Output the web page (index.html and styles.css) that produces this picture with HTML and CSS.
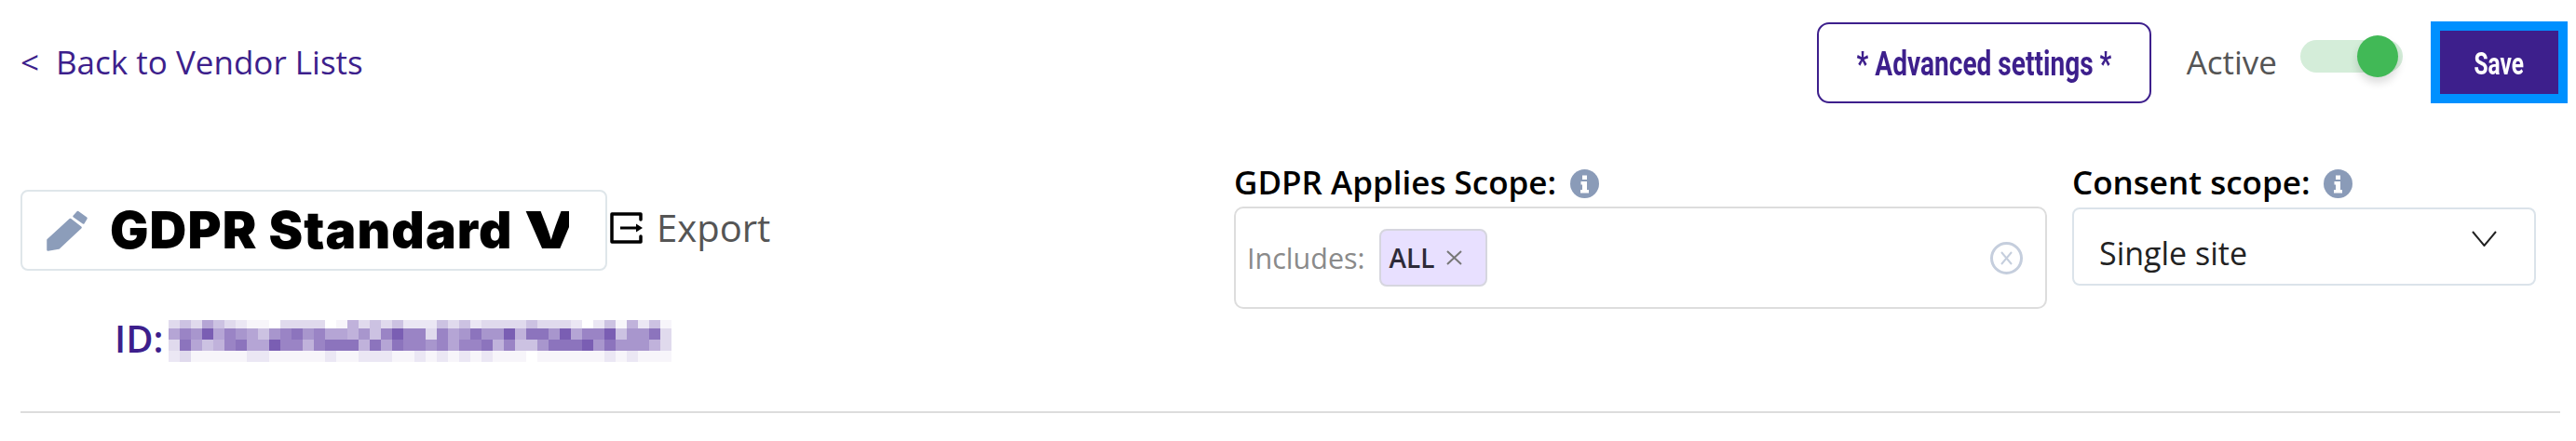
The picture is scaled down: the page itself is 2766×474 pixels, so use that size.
FILE: index.html
```html
<!DOCTYPE html>
<html lang="en">
<head>
<meta charset="utf-8">
<title>Vendor List</title>
<link rel="stylesheet" href="styles.css">
</head>
<body>
<div class="page">
  <header class="topbar">
    <a class="back" href="#"><span class="back-arrow">&lt;</span>Back to Vendor Lists</a>
    <div class="actions">
      <button class="advanced"><span class="narrow">* Advanced settings *</span></button>
      <span class="active-label">Active</span>
      <span class="toggle"><span class="knob"></span></span>
      <button class="save"><span class="narrow-save">Save</span></button>
    </div>
  </header>

  <main class="details">
    <section class="identity">
      <div class="title-row">
        <div class="title-box">
          <svg class="pencil" width="47" height="46" viewBox="0 0 47 46"><path d="M2.5 33 L26.5 11 L37.5 19.5 L14 41.5 L2.5 43.5 Z"/><path d="M30.5 7.5 L34.5 3 L43.5 9.5 L40.5 14.5 Z"/></svg>
          <span class="title-text">GDPR Standard <span class="title-last">V</span></span>
        </div>
        <a class="export" href="#">
          <svg width="35" height="34" viewBox="0 0 35 34"><path class="export-frame" d="M33 8V2H2V32H33V26"/><path class="export-line" d="M11 17H29"/><path class="export-head" d="M28 12.5L35 17L28 21.5Z"/></svg>
          <span>Export</span>
        </a>
      </div>
      <div class="id-row">
        <span class="id-label">ID:</span>
        <div class="redacted" aria-hidden="true">
          <i class="l3"></i><i class="l4"></i><i class="l3"></i><i class="l6"></i><i class="l4"></i><i class="l3"></i><i class="l2"></i><i class="l1"></i><i class="l1"></i><i class="l0"></i><i class="l3"></i><i class="l3"></i><i class="l3"></i><i class="l3"></i><i class="l0"></i><i class="l1"></i><i class="l5"></i><i class="l3"></i><i class="l4"></i><i class="l3"></i><i class="l4"></i><i class="l2"></i><i class="l2"></i><i class="l2"></i><i class="l4"></i><i class="l3"></i><i class="l4"></i><i class="l2"></i><i class="l3"></i><i class="l3"></i><i class="l3"></i><i class="l3"></i><i class="l4"></i><i class="l3"></i><i class="l3"></i><i class="l3"></i><i class="l2"></i><i class="l0"></i><i class="l2"></i><i class="l4"></i><i class="l1"></i><i class="l5"></i><i class="l2"></i><i class="l4"></i><i class="l1"></i>
          <i class="l6"></i><i class="l8"></i><i class="l7"></i><i class="l10"></i><i class="l6"></i><i class="l8"></i><i class="l7"></i><i class="l6"></i><i class="l4"></i><i class="l7"></i><i class="l8"></i><i class="l9"></i><i class="l7"></i><i class="l8"></i><i class="l6"></i><i class="l6"></i><i class="l5"></i><i class="l7"></i><i class="l4"></i><i class="l8"></i><i class="l10"></i><i class="l8"></i><i class="l8"></i><i class="l3"></i><i class="l8"></i><i class="l6"></i><i class="l7"></i><i class="l9"></i><i class="l7"></i><i class="l7"></i><i class="l10"></i><i class="l5"></i><i class="l9"></i><i class="l9"></i><i class="l7"></i><i class="l10"></i><i class="l6"></i><i class="l8"></i><i class="l8"></i><i class="l10"></i><i class="l4"></i><i class="l7"></i><i class="l7"></i><i class="l9"></i><i class="l3"></i>
          <i class="l3"></i><i class="l9"></i><i class="l6"></i><i class="l4"></i><i class="l5"></i><i class="l8"></i><i class="l9"></i><i class="l6"></i><i class="l6"></i><i class="l10"></i><i class="l8"></i><i class="l8"></i><i class="l5"></i><i class="l8"></i><i class="l9"></i><i class="l9"></i><i class="l9"></i><i class="l5"></i><i class="l9"></i><i class="l6"></i><i class="l9"></i><i class="l8"></i><i class="l8"></i><i class="l7"></i><i class="l8"></i><i class="l6"></i><i class="l8"></i><i class="l8"></i><i class="l9"></i><i class="l5"></i><i class="l8"></i><i class="l4"></i><i class="l4"></i><i class="l7"></i><i class="l9"></i><i class="l9"></i><i class="l9"></i><i class="l10"></i><i class="l7"></i><i class="l9"></i><i class="l7"></i><i class="l7"></i><i class="l7"></i><i class="l5"></i><i class="l3"></i>
          <i class="l2"></i><i class="l3"></i><i class="l1"></i><i class="l1"></i><i class="l1"></i><i class="l1"></i><i class="l1"></i><i class="l2"></i><i class="l2"></i><i class="l1"></i><i class="l1"></i><i class="l1"></i><i class="l1"></i><i class="l1"></i><i class="l2"></i><i class="l1"></i><i class="l1"></i><i class="l2"></i><i class="l2"></i><i class="l2"></i><i class="l1"></i><i class="l1"></i><i class="l2"></i><i class="l1"></i><i class="l2"></i><i class="l1"></i><i class="l2"></i><i class="l1"></i><i class="l2"></i><i class="l1"></i><i class="l1"></i><i class="l1"></i><i class="l0"></i><i class="l1"></i><i class="l1"></i><i class="l1"></i><i class="l1"></i><i class="l1"></i><i class="l1"></i><i class="l2"></i><i class="l1"></i><i class="l2"></i><i class="l1"></i><i class="l1"></i><i class="l1"></i>
        </div>
      </div>
    </section>

    <section class="scope">
      <div class="field-label"><span>GDPR Applies Scope:</span>
        <svg class="info" width="31" height="31" viewBox="0 0 31 31"><circle cx="15.5" cy="15.5" r="15.5"/><path class="info-glyph" d="M13 6.500h5v4.500h-5zM11.500 13h6.500v9h2v3.500h-9V22h2v-5.500h-1.500z"/></svg>
      </div>
      <div class="scope-box">
        <span class="includes">Includes:</span>
        <span class="tag"><span>ALL</span>
          <svg width="17" height="16" viewBox="0 0 17 16"><path d="M1 1L16 15M16 1L1 15"/></svg>
        </span>
        <svg class="clear" width="35" height="35" viewBox="0 0 35 35"><circle cx="17.500" cy="17.500" r="16"/><path d="M12 11L23 24M23 11L12 24"/></svg>
      </div>
    </section>

    <section class="consent">
      <div class="field-label"><span>Consent scope:</span>
        <svg class="info" width="31" height="31" viewBox="0 0 31 31"><circle cx="15.5" cy="15.5" r="15.5"/><path class="info-glyph" d="M13 6.500h5v4.500h-5zM11.500 13h6.500v9h2v3.500h-9V22h2v-5.500h-1.500z"/></svg>
      </div>
      <div class="select-box">
        <span class="select-value">Single site</span>
        <svg class="chevron" width="27" height="17" viewBox="0 0 27 17"><path d="M1 1L13.500 16L26 1"/></svg>
      </div>
    </section>
  </main>

  <hr class="divider">
</div>
</body>
</html>
```

FILE: styles.css
```css
* { box-sizing: border-box; }

html, body {
  margin: 0;
  height: 474px;
  background: #fff;
  overflow: hidden;
}

body {
  font-family: "Open Sans", "Noto Sans", sans-serif;
  color: #000;
}

.page {
  padding: 23px 9px 0 22px;
}

.topbar {
  display: flex;
  justify-content: space-between;
  align-items: center;
  height: 88px;
}

.back {
  color: #3d1f8c;
  font-size: 35px;
  line-height: 48px;
  text-decoration: none;
}

.back-arrow {
  display: inline-block;
  width: 38px;
}

.actions {
  display: flex;
  align-items: center;
}

button {
  font-family: "Roboto", sans-serif;
  font-weight: 700;
  cursor: pointer;
}

.advanced {
  width: 359px;
  height: 87px;
  background: #fff;
  border: 2.5px solid #3d1f8c;
  border-radius: 13px;
  color: #3d1f8c;
  font-size: 36px;
  padding: 3px 0 0;
}

.narrow {
  display: inline-block;
  white-space: nowrap;
  transform: scaleX(0.78);
}

.narrow-save {
  display: inline-block;
  transform: scaleX(0.72);
}

.active-label {
  margin-left: 38px;
  color: #555;
  font-size: 35px;
  line-height: 48px;
}

.toggle {
  position: relative;
  width: 110px;
  height: 35px;
  margin: 0 30px 13px 25px;
  border-radius: 18px;
  background: #d4edd9;
}

.knob {
  position: absolute;
  left: 61px;
  top: -5px;
  width: 44px;
  height: 45px;
  border-radius: 50%;
  background: #41b956;
  box-shadow: 0 6px 10px rgba(0, 0, 0, 0.14);
}

.save {
  width: 147px;
  height: 88px;
  background: #3d1f8c;
  border: 10px solid #0090ff;
  color: #fff;
  font-size: 34px;
  padding: 2px 0 0;
}

.details {
  display: flex;
  align-items: flex-start;
  margin-top: 65px;
}

.identity {
  width: 1303px;
  padding-top: 28px;
}

.title-row {
  display: flex;
  align-items: center;
}

.title-box {
  display: flex;
  align-items: center;
  width: 630px;
  height: 87px;
  padding-left: 25px;
  border: 2px solid #dfe6ea;
  border-radius: 8px;
}

.pencil {
  flex: none;
  margin-right: 22px;
}

.pencil path {
  fill: #8c9dba;
  stroke: #8c9dba;
  stroke-width: 2.5;
  stroke-linejoin: round;
}

.title-text {
  width: 493px;
  margin-top: -2px;
  overflow: hidden;
  white-space: nowrap;
  font-family: "Inter", sans-serif;
  font-weight: 900;
  font-size: 55px;
  letter-spacing: 1.1px;
  line-height: 66px;
}

.title-last {
  display: inline-block;
  transform: scaleX(1.3);
  transform-origin: left center;
}

.export {
  display: flex;
  align-items: center;
  margin: -5px 0 0 3px;
  color: #555;
  font-size: 40px;
  line-height: 54px;
  text-decoration: none;
}

.export svg {
  margin-right: 15px;
}

.export-frame {
  fill: none;
  stroke: #000;
  stroke-width: 3.5;
  stroke-linejoin: round;
  stroke-linecap: round;
}

.export-line {
  fill: none;
  stroke: #000;
  stroke-width: 3;
}

.export-head {
  fill: #000;
}

.id-row {
  display: flex;
  align-items: flex-start;
  margin-top: 53px;
  padding-left: 101px;
}

.id-label {
  width: 58px;
  margin-top: -4px;
  color: #3d1f8c;
  font-size: 40px;
  line-height: 48px;
  font-weight: 600;
}

.redacted {
  display: grid;
  grid-template-columns: repeat(45, 12px);
  grid-template-rows: 9px 12px 12px 12px;
  filter: blur(0.6px);
}

.redacted i { display: block; background: #7355af; }
.redacted .l0 { opacity: 0; }
.redacted .l1 { opacity: 0.06; }
.redacted .l2 { opacity: 0.14; }
.redacted .l3 { opacity: 0.22; }
.redacted .l4 { opacity: 0.36; }
.redacted .l5 { opacity: 0.45; }
.redacted .l6 { opacity: 0.53; }
.redacted .l7 { opacity: 0.62; }
.redacted .l8 { opacity: 0.72; }
.redacted .l9 { opacity: 0.82; }
.redacted .l10 { opacity: 0.95; }

.field-label {
  display: flex;
  align-items: center;
  gap: 15px;
  height: 44px;
  margin-top: -2px;
  font-size: 35px;
  font-weight: 600;
  line-height: 44px;
  white-space: nowrap;
}

.info {
  flex: none;
  margin-top: 2px;
}

.info circle { fill: #8a9bb8; }
.info-glyph { fill: #fff; }

.scope {
  width: 873px;
  margin-right: 27px;
}

.scope-box {
  display: flex;
  align-items: center;
  height: 110px;
  margin-top: 4px;
  padding: 0 24px 0 12px;
  border: 2px solid #ddd;
  border-radius: 10px;
}

.includes {
  color: #8a8a8a;
  font-size: 30.5px;
  line-height: 40px;
  margin: 0 15px 0 0;
}

.tag {
  display: flex;
  align-items: center;
  gap: 12px;
  height: 62px;
  width: 116px;
  padding-left: 9px;
  background: #e8e0ff;
  border: 2px solid #d6d6df;
  border-radius: 8px;
  color: #2d2a38;
  font-size: 28px;
  font-weight: 600;
}

.tag svg path {
  fill: none;
  stroke: #777;
  stroke-width: 2;
}

.clear {
  margin-left: auto;
}

.clear circle, .clear path {
  fill: none;
  stroke: #c5cedd;
  stroke-width: 3;
}

.clear path {
  stroke-width: 2;
}

.consent {
  width: 498px;
}

.select-box {
  display: flex;
  align-items: center;
  justify-content: space-between;
  height: 84px;
  margin-top: 5px;
  padding: 0 40px 0 27px;
  border: 2px solid #dbe3ea;
  border-radius: 8px;
}

.select-value {
  color: #222;
  font-size: 34px;
  font-weight: 500;
  line-height: 46px;
  margin-top: 14px;
}

.chevron {
  margin-bottom: 18px;
}

.chevron path {
  fill: none;
  stroke: #222;
  stroke-width: 2;
}

.divider {
  margin: 53px 8px 0 0;
  height: 2px;
  border: 0;
  background: #ddd;
}
```
